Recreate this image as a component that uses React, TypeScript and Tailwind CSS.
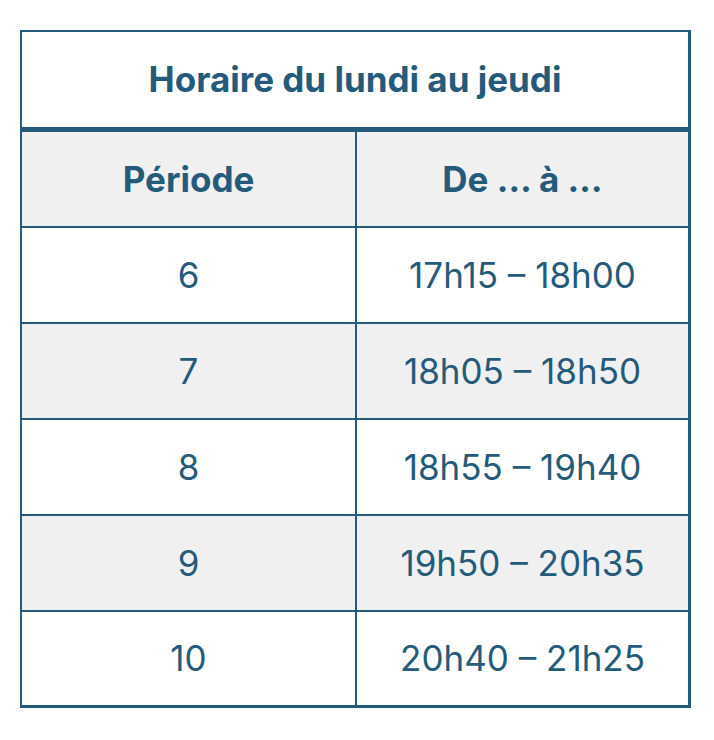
const rows = [
  { periode: '6', plage: '17h15 – 18h00' },
  { periode: '7', plage: '18h05 – 18h50' },
  { periode: '8', plage: '18h55 – 19h40' },
  { periode: '9', plage: '19h50 – 20h35' },
  { periode: '10', plage: '20h40 – 21h25' },
];

export default function App() {
  return (
    <div className="min-h-[740px] bg-white pl-[20px] pt-[30px] font-['Inter',sans-serif] text-[#255b7a]">
      <div className="w-[671px] border-[3px] border-t-[2px] border-l-[2px] border-[#255b7a]">
        <div className="flex h-[100px] items-center justify-center border-b-[5px] border-[#255b7a] text-[35px] font-bold">
          Horaire du lundi au jeudi
        </div>
        <div className="grid h-[96px] grid-cols-[335px_1fr] border-b-2 border-[#255b7a] bg-[#f0f0f0] text-[35px] font-bold">
          <div className="flex items-center justify-center border-r-2 border-[#255b7a]">Période</div>
          <div className="flex items-center justify-center">De … à …</div>
        </div>
        {rows.map((row, i) => (
          <div
            key={row.periode}
            className={`grid grid-cols-[335px_1fr] text-[35px] ${i % 2 === 1 ? 'bg-[#f0f0f0]' : 'bg-white'} ${i < rows.length - 1 ? 'h-[96px] border-b-2 border-[#255b7a]' : 'h-[93px]'}`}
          >
            <div className="flex items-center justify-center border-r-2 border-[#255b7a]">{row.periode}</div>
            <div className="flex items-center justify-center">{row.plage}</div>
          </div>
        ))}
      </div>
    </div>
  );
}
